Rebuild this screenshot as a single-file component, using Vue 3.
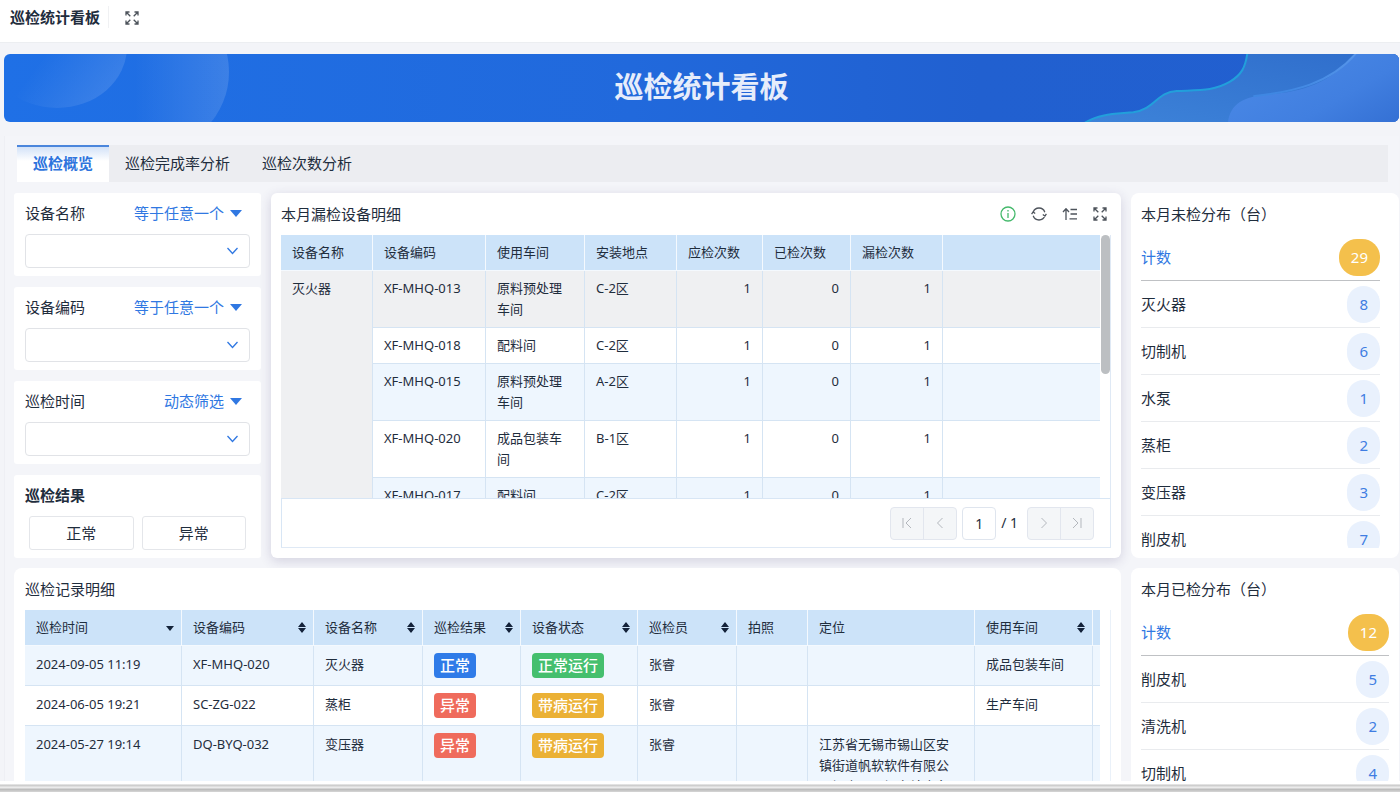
<script setup>
import { ref } from 'vue';

const tabs = ['巡检概览', '巡检完成率分析', '巡检次数分析'];
const activeTab = ref(0);
const page = ref('1');

const filters = [
  { id: 'device-name', label: '设备名称', mode: '等于任意一个' },
  { id: 'device-code', label: '设备编码', mode: '等于任意一个' },
  { id: 'check-time', label: '巡检时间', mode: '动态筛选' }
];

const missedColumns = ['设备名称', '设备编码', '使用车间', '安装地点', '应检次数', '已检次数', '漏检次数', ''];
const missedRows = [
  ['XF-MHQ-013', '原料预处理车间', 'C-2区', 1, 0, 1],
  ['XF-MHQ-018', '配料间', 'C-2区', 1, 0, 1],
  ['XF-MHQ-015', '原料预处理车间', 'A-2区', 1, 0, 1],
  ['XF-MHQ-020', '成品包装车间', 'B-1区', 1, 0, 1],
  ['XF-MHQ-017', '配料间', 'C-2区', 1, 0, 1]
];

const recordColumns = [
  { title: '巡检时间', sort: 'desc' },
  { title: '设备编码', sort: 'both' },
  { title: '设备名称', sort: 'both' },
  { title: '巡检结果', sort: 'both' },
  { title: '设备状态', sort: 'both' },
  { title: '巡检员', sort: 'both' },
  { title: '拍照' },
  { title: '定位' },
  { title: '使用车间', sort: 'both' },
  { title: '' }
];
const records = [
  { time: '2024-09-05 11:19', code: 'XF-MHQ-020', name: '灭火器', result: '正常', status: '正常运行', user: '张睿', place: '', room: '成品包装车间' },
  { time: '2024-06-05 19:21', code: 'SC-ZG-022', name: '蒸柜', result: '异常', status: '带病运行', user: '张睿', place: '', room: '生产车间' },
  { time: '2024-05-27 19:14', code: 'DQ-BYQ-032', name: '变压器', result: '异常', status: '带病运行', user: '张睿', place: '江苏省无锡市锡山区安镇街道帆软软件有限公司锡山区无锡东站商务区', room: '' }
];
const tagColor = { 正常: 'blue', 异常: 'red', 正常运行: 'green', 带病运行: 'yellow' };

const unchecked = {
  title: '本月未检分布（台）',
  total: 29,
  items: [['灭火器', 8], ['切制机', 6], ['水泵', 1], ['蒸柜', 2], ['变压器', 3], ['削皮机', 7]]
};
const checked = {
  title: '本月已检分布（台）',
  total: 12,
  items: [['削皮机', 5], ['清洗机', 2], ['切制机', 4]]
};
</script>

<template>
  <div class="app">
    <header class="topbar">
      <strong>巡检统计看板</strong>
      <button class="icon-btn" aria-label="全屏">
        <svg viewBox="0 0 14 14" class="icon"><path d="M1 4.5V1h3.5M1.3 1.3l4 4M9.5 1H13v3.5M12.7 1.3l-4 4M1 9.5V13h3.5M1.3 12.7l4-4M9.5 13H13V9.5M12.7 12.7l-4-4" /></svg>
      </button>
    </header>

    <div class="banner">
      <svg class="banner-left" viewBox="0 0 260 68">
        <defs>
          <linearGradient id="bubble-a" x1="0.45" y1="0.5" x2="1" y2="0.85">
            <stop offset="0" stop-color="#fff" stop-opacity="0" />
            <stop offset="1" stop-color="#fff" stop-opacity="0.14" />
          </linearGradient>
          <linearGradient id="bubble-b" x1="0.4" y1="0.5" x2="1" y2="0.5">
            <stop offset="0" stop-color="#fff" stop-opacity="0" />
            <stop offset="1" stop-color="#fff" stop-opacity="0.13" />
          </linearGradient>
        </defs>
        <ellipse cx="53" cy="-7" rx="70" ry="61" fill="url(#bubble-a)" />
        <circle cx="146" cy="18" r="79" fill="url(#bubble-b)" />
      </svg>
      <h1>巡检统计看板</h1>
      <svg class="banner-right" viewBox="0 0 1197 204">
        <defs>
          <linearGradient id="wave-a" x1="0" y1="1" x2="1" y2="0">
            <stop offset="0" stop-color="#3d83d9" />
            <stop offset="1" stop-color="#2f6dcb" />
          </linearGradient>
          <linearGradient id="wave-b" x1="0" y1="0.3" x2="1" y2="1">
            <stop offset="0" stop-color="#4a89e6" />
            <stop offset="0.6" stop-color="#417fe0" />
            <stop offset="1" stop-color="#3470d4" />
          </linearGradient>
          <linearGradient id="edge-b" x1="0" y1="1" x2="1" y2="0">
            <stop offset="0.2" stop-color="#3f87e2" />
            <stop offset="1" stop-color="#5795ea" />
          </linearGradient>
        </defs>
        <path d="M255 206C300 178 350 180 400 175C465 166 470 114 530 111C600 108 640 112 690 83C725 62 736 40 742-2H1200V206Z" fill="url(#wave-a)" />
        <path d="M255 206C300 178 350 180 400 175C465 166 470 114 530 111C600 108 640 112 690 83C725 62 736 40 742-2" fill="none" stroke="#229fdb" stroke-width="6" />
        <path d="M684 206C690 150 730 128 800 122C900 115 990 90 1068-2H1200V206Z" fill="url(#wave-b)" />
        <path d="M760 127C880 113 990 90 1068-2" fill="none" stroke="url(#edge-b)" stroke-width="6" />
      </svg>
    </div>

    <main class="board">
      <nav class="tabs" role="tablist">
        <button
          v-for="(tab, i) in tabs"
          :key="tab"
          role="tab"
          :aria-selected="activeTab === i"
          :class="{ active: activeTab === i }"
          @click="activeTab = i"
        >{{ tab }}</button>
      </nav>

      <div class="grid">
        <aside class="filters">
          <section v-for="f in filters" :key="f.id" class="filter">
            <div class="filter-head">
              <label :for="f.id">{{ f.label }}</label>
              <span class="mode">
                <select :aria-label="f.label + '筛选方式'">
                  <option>{{ f.mode }}</option>
                </select>
                <svg viewBox="0 0 12 7"><path d="M0 0h12L6 7z" /></svg>
              </span>
            </div>
            <div class="picker">
              <select :id="f.id"><option></option></select>
              <svg viewBox="0 0 12 8"><path d="M1 1l5 5.5L11 1" /></svg>
            </div>
          </section>
          <section class="filter">
            <div class="filter-head"><strong>巡检结果</strong></div>
            <div class="choices">
              <button>正常</button>
              <button>异常</button>
            </div>
          </section>
        </aside>

        <section class="card raised">
          <div class="card-head">
            <h2>本月漏检设备明细</h2>
            <div class="tools">
              <button class="icon-btn" aria-label="提示">
                <svg viewBox="0 0 16 16" class="icon info"><circle cx="8" cy="8" r="7" /><path d="M8 7v5M8 4v1.5" /></svg>
              </button>
              <button class="icon-btn" aria-label="刷新">
                <svg viewBox="0 0 16 16" class="icon"><path d="M2.2 6.2A6.1 6.1 0 0 1 13.8 6.2M13.8 9.8A6.1 6.1 0 0 1 2.2 9.8M0.6 8.2L2.1 6L4.2 7.5M15.4 7.8L13.9 10L11.8 8.5" /></svg>
              </button>
              <button class="icon-btn" aria-label="排序">
                <svg viewBox="0 0 16 16" class="icon"><path d="M4 14V3M1 6l3-3.2L7 6M8.5 3.5H15M8.5 8H15M7.5 12.8H15" /></svg>
              </button>
              <button class="icon-btn" aria-label="放大">
                <svg viewBox="0 0 14 14" class="icon small"><path d="M1 4.5V1h3.5M1.3 1.3l4 4M9.5 1H13v3.5M12.7 1.3l-4 4M1 9.5V13h3.5M1.3 12.7l4-4M9.5 13H13V9.5M12.7 12.7l-4-4" /></svg>
              </button>
            </div>
          </div>
          <div class="table-box">
            <div class="scroller">
              <div class="viewport">
                <table class="missed">
                  <colgroup><col v-for="(c, i) in missedColumns" :key="i" :class="'m' + i" /></colgroup>
                  <thead>
                    <tr><th v-for="(c, i) in missedColumns" :key="i">{{ c }}</th></tr>
                  </thead>
                  <tbody>
                    <tr v-for="(row, r) in missedRows" :key="row[0]" :class="{ hover: r === 0 }">
                      <td v-if="r === 0" :rowspan="missedRows.length">灭火器</td>
                      <td v-for="(cell, i) in row" :key="i" :class="{ num: i > 2 }">{{ cell }}</td>
                      <td></td>
                    </tr>
                  </tbody>
                </table>
              </div>
              <div class="track"><div class="thumb"></div></div>
            </div>
            <div class="pager">
              <div class="pager-group">
                <button disabled aria-label="首页"><svg viewBox="0 0 12 12"><path d="M2 1v10M10 1L5 6l5 5" /></svg></button>
                <button disabled aria-label="上一页"><svg viewBox="0 0 12 12"><path d="M8.5 1l-5 5 5 5" /></svg></button>
              </div>
              <input v-model="page" aria-label="页码" />
              <span>/ 1</span>
              <div class="pager-group">
                <button disabled aria-label="下一页"><svg viewBox="0 0 12 12"><path d="M3.5 1l5 5-5 5" /></svg></button>
                <button disabled aria-label="末页"><svg viewBox="0 0 12 12"><path d="M10 1v10M2 1l5 5-5 5" /></svg></button>
              </div>
            </div>
          </div>
        </section>

        <section class="card stat">
          <h2>{{ unchecked.title }}</h2>
          <ul class="stat-list gutter">
            <li class="total"><span>计数</span><b>{{ unchecked.total }}</b></li>
            <li v-for="[name, n] in unchecked.items" :key="name"><span>{{ name }}</span><b>{{ n }}</b></li>
          </ul>
        </section>

        <section class="card records">
          <div class="card-head"><h2>巡检记录明细</h2></div>
          <div class="records-box">
            <table class="record">
              <colgroup><col v-for="(c, i) in recordColumns" :key="i" :class="'r' + i" /></colgroup>
              <thead>
                <tr>
                  <th v-for="c in recordColumns" :key="c.title">
                    <div class="th">
                      {{ c.title }}
                      <button v-if="c.sort" class="sort" :aria-label="c.title + '排序'">
                        <svg v-if="c.sort === 'both'" viewBox="0 0 8 11"><path d="M4 0l4 5H0zM0 6h8l-4 5z" /></svg>
                        <svg v-else viewBox="0 0 8 11"><path d="M0 4h8l-4 5z" /></svg>
                      </button>
                    </div>
                  </th>
                </tr>
              </thead>
              <tbody>
                <tr v-for="r in records" :key="r.time">
                  <td>{{ r.time }}</td>
                  <td>{{ r.code }}</td>
                  <td>{{ r.name }}</td>
                  <td class="tag-cell"><span class="tag" :class="tagColor[r.result]">{{ r.result }}</span></td>
                  <td class="tag-cell"><span class="tag" :class="tagColor[r.status]">{{ r.status }}</span></td>
                  <td>{{ r.user }}</td>
                  <td></td>
                  <td>{{ r.place }}</td>
                  <td>{{ r.room }}</td>
                  <td></td>
                </tr>
              </tbody>
            </table>
          </div>
        </section>

        <section class="card stat">
          <h2>{{ checked.title }}</h2>
          <ul class="stat-list">
            <li class="total"><span>计数</span><b>{{ checked.total }}</b></li>
            <li v-for="[name, n] in checked.items" :key="name"><span>{{ name }}</span><b>{{ n }}</b></li>
          </ul>
        </section>
      </div>
    </main>
    <div class="bottom-edge"></div>
  </div>
</template>

<style>
body {
  margin: 0;
}
</style>

<style scoped>
.app {
  height: 100vh;
  display: flex;
  flex-direction: column;
  overflow: hidden;
  background: #f3f4f8;
  color: #1f2d3d;
  font: 15px/22px "Noto Sans", "Noto Sans CJK SC", sans-serif;
}

* {
  box-sizing: border-box;
}

button, select, input {
  font: inherit;
  color: inherit;
  margin: 0;
}

button {
  padding: 0;
  border: 0;
  background: none;
  cursor: pointer;
}

h1, h2, ul {
  margin: 0;
  padding: 0;
}

h2 {
  font-size: 15px;
  font-weight: 400;
}

.icon {
  display: block;
  width: 16px;
  height: 16px;
  fill: none;
  stroke: #4d535b;
  stroke-width: 1.3;
}

.icon.small, .topbar .icon {
  width: 14px;
  height: 14px;
}

.icon.info {
  stroke: #45b96c;
}

.topbar {
  flex: none;
  height: 43px;
  padding: 6px 10px;
  display: flex;
  align-items: flex-start;
  background: #fff;
  border-bottom: 1px solid #eceef1;
}

.topbar strong {
  padding-right: 8px;
  border-right: 1px solid #f0f1f3;
}

.topbar .icon-btn {
  margin: 5px 0 0 16px;
}

.banner {
  position: relative;
  flex: none;
  height: 68px;
  margin: 11px 1px 0 4px;
  padding-bottom: 2px;
  border-radius: 6px;
  overflow: hidden;
  display: flex;
  align-items: center;
  justify-content: center;
  background: linear-gradient(90deg, #1f70e6, #2169dc 45%, #2160d0 70%, #225fcf);
}

.banner h1 {
  color: #e6edfb;
  font-size: 29px;
  line-height: 40px;
}

.banner-left, .banner-right {
  position: absolute;
  top: 0;
  height: 68px;
}

.banner-left {
  left: 0;
  width: 260px;
}

.banner-right {
  right: 0;
  width: 399px;
}

.board {
  flex: 1;
  min-height: 0;
  margin: 14px 1px 0 4px;
  padding: 9px 0 0 10px;
  display: flex;
  flex-direction: column;
  background: #f4f5f9;
  border-left: 1px solid #eeeff4;
}

.tabs {
  flex: none;
  height: 37px;
  margin: 0 11px 11px 2px;
  display: flex;
  background: #ecedf1;
}

.tabs button {
  padding: 0 16px 4px;
  border-top: 2px solid transparent;
}

.tabs .active {
  color: #2e74dd;
  font-weight: 700;
  border-top-color: #4b86dc;
  background: linear-gradient(#d3e2f8, #fff 14px);
}

.grid {
  flex: 1;
  min-height: 0;
  margin-left: -1px;
  display: grid;
  grid-template-columns: 247px minmax(0, 1fr) 268px;
  grid-template-rows: 365px minmax(0, 1fr);
  gap: 10px;
}

.filters {
  display: flex;
  flex-direction: column;
  justify-content: space-between;
}

.filter {
  padding: 9px 11px 8px;
  background: #fff;
  border-radius: 3px;
}

.filter-head {
  height: 22px;
  margin-bottom: 10px;
  display: flex;
  justify-content: space-between;
}

.mode {
  padding-right: 8px;
  display: flex;
  align-items: center;
  gap: 5px;
  color: #3078e2;
}

.mode select {
  appearance: none;
  padding: 0;
  border: 0;
  background: none;
}

.mode svg {
  width: 12px;
  height: 7px;
  fill: #3078e2;
}

.picker {
  position: relative;
}

.picker select {
  appearance: none;
  display: block;
  width: 100%;
  height: 34px;
  border: 1px solid #e1e3e7;
  border-radius: 4px;
  background: #fff;
}

.picker svg {
  position: absolute;
  top: 13px;
  right: 11px;
  width: 13px;
  height: 8px;
  fill: none;
  stroke: #3078e2;
  stroke-width: 1.3;
  pointer-events: none;
}

.choices {
  padding: 0 4px;
  display: flex;
  gap: 8px;
}

.choices button {
  flex: 1;
  height: 34px;
  border: 1px solid #e4e6ea;
  border-radius: 3px;
}

.card {
  min-height: 0;
  padding: 10px;
  display: flex;
  flex-direction: column;
  overflow: hidden;
  background: #fff;
  border-radius: 8px;
}

.raised {
  border-radius: 6px;
  box-shadow: 0 3px 12px rgba(60, 50, 110, 0.18);
}

.card-head {
  flex: none;
  height: 22px;
  margin-bottom: 10px;
  display: flex;
  align-items: center;
  justify-content: space-between;
}

.tools {
  display: flex;
  align-items: center;
  gap: 15px;
  padding: 0 4px 1px 0;
}

.table-box {
  flex: 1;
  min-height: 0;
  display: flex;
  flex-direction: column;
  border: 1px solid #dfe9f5;
  border-width: 0 1px 1px 0;
}

.scroller {
  flex: 1;
  min-height: 0;
  display: flex;
}

.viewport {
  flex: 1;
  overflow: hidden;
}

.track {
  width: 10px;
  padding-left: 1px;
}

.thumb {
  height: 139px;
  border-radius: 5px;
  background: #bcbfc2;
}

table {
  width: 100%;
  table-layout: fixed;
  border-collapse: separate;
  border-spacing: 0;
  font-size: 13px;
  line-height: 21px;
}

th {
  height: 36px;
  padding: 0 11px;
  font-weight: 400;
  text-align: left;
  background: #cce3f9;
  border: 1px solid #f4f9fe;
  border-width: 0 1px 1px 0;
}

td {
  padding: 7px 11px;
  vertical-align: top;
  border: 1px solid #d5e4f3;
  border-width: 0 1px 1px 0;
}

th:last-child, td:last-child {
  border-right: 0;
}

tbody tr:nth-child(odd) td {
  background: #eef6fe;
}

tbody tr.hover:nth-child(odd) td {
  background: #eff0f2;
}

.num {
  text-align: right;
}

.m0 { width: 92px; }
.m1 { width: 113px; }
.m2 { width: 99px; }
.m3 { width: 92px; }
.m4 { width: 86px; }
.m5 { width: 88px; }
.m6 { width: 92px; }

.pager {
  flex: none;
  height: 49px;
  padding-right: 16px;
  display: flex;
  align-items: center;
  justify-content: flex-end;
  gap: 5px;
  border: 1px solid #d8e6f5;
  border-width: 1px 0 0 1px;
}

.pager-group {
  display: flex;
  border: 1px solid #e2e6ee;
  border-radius: 4px;
  background: #f4f6f8;
}

.pager-group button {
  width: 32px;
  height: 31px;
}

.pager-group button + button {
  width: 33px;
  border-left: 1px solid #e2e6ee;
}

.pager svg {
  display: block;
  width: 12px;
  height: 12px;
  margin: auto;
  fill: none;
  stroke: #b3b7bd;
}

.pager input {
  width: 34px;
  height: 33px;
  padding: 0;
  text-align: center;
  border: 1px solid #dfe5ee;
  border-radius: 4px;
}

.pager span {
  padding-right: 4px;
}

.pager input, .pager span {
  font-size: 14px;
}

.stat h2 {
  margin-bottom: 9px;
}

.stat-list {
  flex: 1;
  min-height: 0;
  overflow: hidden;
  list-style: none;
}

.gutter {
  margin-right: 9px;
}

.stat-list li {
  height: 47px;
  display: flex;
  align-items: center;
  justify-content: space-between;
  border-bottom: 1px solid #e9ebee;
}

.stat-list .total {
  color: #3078e2;
  border-bottom-color: #bfc1c4;
}

.stat-list b {
  padding: 0 12px;
  border-radius: 18px;
  line-height: 37px;
  font-weight: 400;
  color: #3f7de2;
  background: #e9f1fd;
}

.stat-list .total b {
  color: #fff;
  background: #f4c04c;
}

.records {
  grid-column: 1 / 3;
  padding-left: 11px;
}

.records, .records ~ .stat {
  padding-bottom: 0;
  border-radius: 8px 8px 0 0;
}

.records-box {
  flex: 1;
  min-height: 0;
  padding-right: 10px;
  overflow: hidden;
  border-right: 1px solid #eaf1f9;
}

.record td {
  padding: 8px 11px 7px;
}

.record td:nth-child(8) {
  padding-right: 16px;
}

.record .tag-cell {
  padding-top: 7px;
}

.r0 { width: 157px; }
.r1 { width: 132px; }
.r2 { width: 109px; }
.r3 { width: 98px; }
.r4 { width: 117px; }
.r5 { width: 99px; }
.r6 { width: 71px; }
.r7 { width: 167px; }
.r8 { width: 118px; }

.record th {
  padding-right: 7px;
}

.record th:last-child, .record td:last-child {
  padding: 0;
}

.th {
  display: flex;
  align-items: center;
  justify-content: space-between;
}

.sort svg {
  display: block;
  width: 8px;
  height: 11px;
  fill: #14233a;
}

.tag {
  display: block;
  width: fit-content;
  height: 25px;
  padding: 0 6px;
  border-radius: 4px;
  color: #fff;
  font-size: 15px;
  font-weight: 500;
  line-height: 24px;
}

.blue { background: #2f7be8; }
.red { background: #ef6b5c; }
.green { background: #45bf6e; }
.yellow { background: #ebb135; }

.bottom-edge {
  flex: none;
  height: 11px;
  background: linear-gradient(#fff 3px, #c6c6c6 4px, #e6e6e6 6px, #f0f0f0 7px, #b8b8b8 8px, #d6d6d6);
}
</style>
